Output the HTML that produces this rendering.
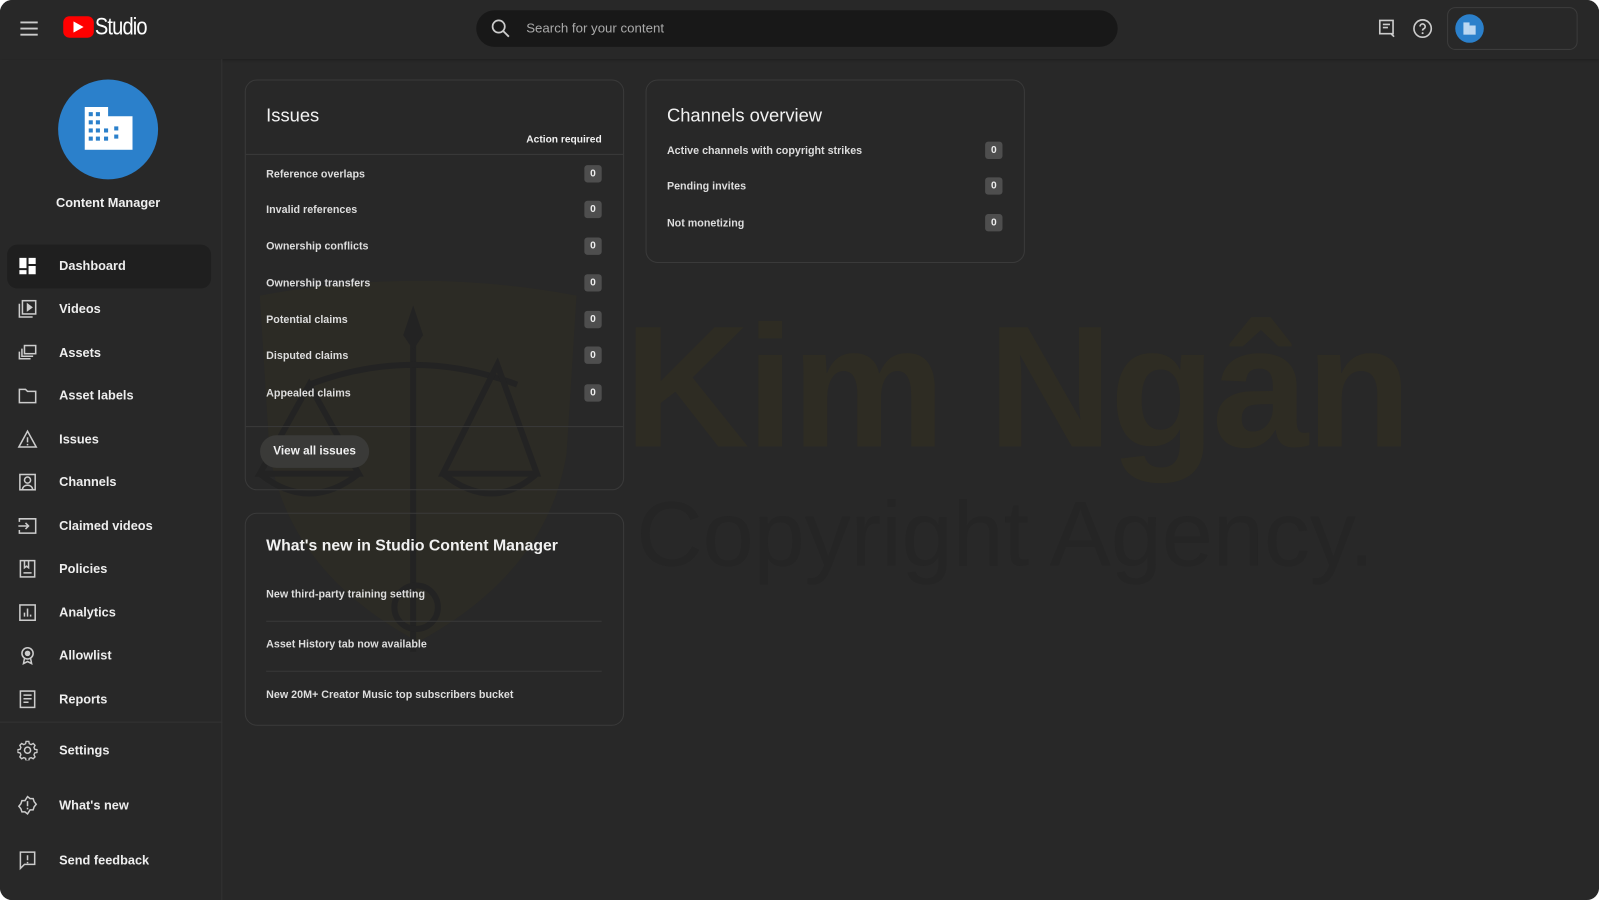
<!DOCTYPE html>
<html><head><meta charset="utf-8">
<style>
*{box-sizing:border-box;margin:0;padding:0}
html,body{width:1599px;height:900px;background:#fff;overflow:hidden}
#s{position:absolute;left:0;top:0;width:1568px;height:883px;transform:scale(1.0198,1.0193);transform-origin:0 0;background:#282828;border-radius:12px;overflow:hidden;font-family:"Liberation Sans",sans-serif;color:#f1f1f1}
.a{position:absolute}
.hdr{left:0;top:0;width:1568px;height:58px;background:#282828;box-shadow:0 1px 3px rgba(0,0,0,.35)}
.side{left:0;top:58px;width:218px;height:825px;border-right:1px solid #333;background:#282828}
.nav{position:absolute;left:0;width:218px;height:42px;display:flex;align-items:center;font-size:12.5px;font-weight:bold;color:#eee}
.nav svg{position:absolute;left:17px;width:20px;height:20px}
.nav span{position:absolute;left:58px}
.card{position:absolute;border:1px solid #3a3a3a;border-radius:12px;background:transparent}
.row{position:absolute;left:20px;right:21px;font-size:10.5px;color:#ddd;font-weight:bold}
.bd{position:absolute;right:0;top:-3px;width:17px;height:17px;background:#4e4e4e;border-radius:3px;font-size:10px;text-align:center;line-height:17px;color:#eee}
.hl{position:absolute;height:1px;background:#393939}
</style></head><body>
<div id="s">
<svg class="a" style="left:245px;top:265px" width="330" height="380" viewBox="0 0 340 380">
<path d="M10 20 Q170 -10 330 20 L320 180 Q300 300 170 370 Q40 300 20 180 Z" fill="#2d2b24" opacity=".85"/>
<g stroke="#232323" stroke-width="6" fill="none">
<line x1="165" y1="50" x2="165" y2="380"/><path d="M60 110 Q165 70 270 110"/>
<path d="M60 110 L10 200 L110 200 Z M10 200 Q60 240 110 200"/>
<path d="M250 90 L195 200 L290 200 Z M195 200 Q245 240 290 200"/>
<circle cx="168" cy="335" r="22"/></g>
<path d="M165 30 L175 60 L165 75 L155 60 Z" fill="#232323"/>
</svg>
<div class="a" style="left:612px;top:282px;font-size:170px;font-weight:bold;color:#2e2c23;letter-spacing:-3px;white-space:nowrap">Kim Ngân</div>
<div class="a" style="left:624px;top:474px;font-size:90px;color:#252525;white-space:nowrap">Copyright Agency.</div>

<div class="a hdr">
<svg class="a" style="left:19px;top:20px" width="19" height="16" viewBox="0 0 19 16"><path d="M1 2h17M1 8h17M1 14h17" stroke="#ccc" stroke-width="1.8"/></svg>
<div class="a" style="left:62px;top:16px;width:30px;height:21px;background:#f00;border-radius:6px"></div>
<svg class="a" style="left:72px;top:21px" width="10" height="11"><path d="M0 0L10 5.5L0 11Z" fill="#fff"/></svg>
<div class="a" style="left:93px;top:13px;font-family:'Liberation Sans Narrow','Liberation Sans',sans-serif;font-size:24px;color:#fff;letter-spacing:-1px;transform:scaleX(.82);transform-origin:0 0">Studio</div>
<div class="a" style="left:467px;top:10px;width:629px;height:36px;background:#181818;border-radius:18px"></div>
<svg class="a" style="left:482px;top:19px" width="18" height="18" viewBox="0 0 18 18"><circle cx="7" cy="7" r="6" stroke="#ccc" stroke-width="1.7" fill="none"/><path d="M11.5 11.5L17 17" stroke="#ccc" stroke-width="1.8"/></svg>
<div class="a" style="left:516px;top:20px;font-size:13px;color:#aaa">Search for your content</div>
<svg class="a" style="left:1351px;top:18px" width="18" height="19" viewBox="0 0 18 19"><path d="M2 2h13v13H2z" stroke="#ccc" stroke-width="1.6" fill="none"/><path d="M5 6h7M5 9h5M13 15l3 3" stroke="#ccc" stroke-width="1.6"/></svg>
<svg class="a" style="left:1385px;top:18px" width="20" height="20" viewBox="0 0 20 20"><circle cx="10" cy="10" r="8.5" stroke="#ccc" stroke-width="1.6" fill="none"/><path d="M7.5 8a2.5 2.5 0 1 1 3.5 2.3c-.8.4-1 .8-1 1.7" stroke="#ccc" stroke-width="1.6" fill="none"/><circle cx="10" cy="14.5" r="1" fill="#ccc"/></svg>
<div class="a" style="left:1419px;top:7px;width:128px;height:42px;border:1px solid #3c3c3c;border-radius:8px"></div>
<div class="a" style="left:1427px;top:14px;width:28px;height:28px;border-radius:50%;background:#2b80cb"></div>
<div class="a" style="left:1435px;top:22px;width:6px;height:12px;background:#bcd8f2"></div>
<div class="a" style="left:1441px;top:25px;width:6px;height:9px;background:#bcd8f2"></div>
</div>

<div class="a side">
<div class="a" style="left:57px;top:20px;width:98px;height:98px;border-radius:50%;background:#2b80cb"></div>
<svg class="a" style="left:83px;top:47px" width="47" height="42" viewBox="0 0 47 42"><path d="M0 0h23v9h24v33H0z" fill="#fff"/><g fill="#2b80cb"><rect x="4" y="5" width="4" height="4"/><rect x="11" y="5" width="4" height="4"/><rect x="4" y="13" width="4" height="4"/><rect x="11" y="13" width="4" height="4"/><rect x="4" y="21" width="4" height="4"/><rect x="11" y="21" width="4" height="4"/><rect x="4" y="29" width="4" height="4"/><rect x="11" y="29" width="4" height="4"/><rect x="19" y="21" width="4" height="4"/><rect x="19" y="29" width="4" height="4"/><rect x="29" y="19" width="4" height="4"/><rect x="29" y="27" width="4" height="4"/></g></svg>
<div class="a" style="left:0;width:212px;top:134px;text-align:center;font-size:12.5px;font-weight:bold">Content Manager</div>
<div class="a" style="left:7px;top:182px;width:200px;height:43px;background:#1f1f1f;border-radius:10px"></div>
<div class="nav" style="top:182px"><svg viewBox="0 0 20 20"><path d="M2 2h7v10H2zM11 2h7v6h-7zM11 10h7v8h-7zM2 14h7v4H2z" fill="#fff"/></svg><span>Dashboard</span></div>
<div class="nav" style="top:224px"><svg viewBox="0 0 20 20" fill="none" stroke="#ccc" stroke-width="1.5"><rect x="5" y="2" width="13" height="13"/><path d="M2 5v13h13"/><path d="M10 5.5l4 3-4 3z" fill="#ccc"/></svg><span>Videos</span></div>
<div class="nav" style="top:267px"><svg viewBox="0 0 20 20" fill="none" stroke="#ccc" stroke-width="1.5"><rect x="7" y="3" width="11" height="8"/><path d="M4.5 6v7.5h11M2 9v7h11"/></svg><span>Assets</span></div>
<div class="nav" style="top:309px"><svg viewBox="0 0 20 20" fill="none" stroke="#ccc" stroke-width="1.5"><path d="M2 4h6l2 2h8v11H2z"/></svg><span>Asset labels</span></div>
<div class="nav" style="top:352px"><svg viewBox="0 0 20 20" fill="none" stroke="#ccc" stroke-width="1.5"><path d="M10 2L1.5 17.5h17z"/><path d="M10 8v5M10 14.5v1.5"/></svg><span>Issues</span></div>
<div class="nav" style="top:394px"><svg viewBox="0 0 20 20" fill="none" stroke="#ccc" stroke-width="1.5"><rect x="2.5" y="2.5" width="15" height="15"/><circle cx="10" cy="8" r="3"/><path d="M5 17.5c0-3 2.5-4.5 5-4.5s5 1.5 5 4.5"/></svg><span>Channels</span></div>
<div class="nav" style="top:437px"><svg viewBox="0 0 20 20" fill="none" stroke="#ccc" stroke-width="1.5"><path d="M2 6V3h16v14H2v-3"/><path d="M1 10h10M8 7l3 3-3 3"/></svg><span>Claimed videos</span></div>
<div class="nav" style="top:479px"><svg viewBox="0 0 20 20" fill="none" stroke="#ccc" stroke-width="1.5"><rect x="3" y="2" width="14" height="16"/><path d="M7 2v7l2-1.5L11 9V2M6 14h8"/></svg><span>Policies</span></div>
<div class="nav" style="top:522px"><svg viewBox="0 0 20 20" fill="none" stroke="#ccc" stroke-width="1.5"><rect x="2.5" y="2.5" width="15" height="15"/><path d="M7 14V10M10 14V6M13 14v-2"/></svg><span>Analytics</span></div>
<div class="nav" style="top:564px"><svg viewBox="0 0 20 20" fill="none" stroke="#ccc" stroke-width="1.5"><circle cx="10" cy="8" r="5.5"/><circle cx="10" cy="8" r="2" fill="#ccc"/><path d="M7 13l-1 5 4-2 4 2-1-5"/></svg><span>Allowlist</span></div>
<div class="nav" style="top:607px"><svg viewBox="0 0 20 20" fill="none" stroke="#ccc" stroke-width="1.5"><rect x="3" y="2" width="14" height="16"/><path d="M6 6h8M6 9.5h8M6 13h5"/></svg><span>Reports</span></div>
<div class="hl" style="left:0;top:650px;width:218px;background:#333"></div>
<div class="nav" style="top:657px"><svg viewBox="0 0 20 20" fill="none" stroke="#ccc" stroke-width="1.5"><circle cx="10" cy="10" r="3"/><path d="M8.5 1.5h3l.5 2.5 2 1 2.3-1.2 2 2-1.2 2.3.8 2 2.6.5v3l-2.6.5-.8 2 1.2 2.3-2 2-2.3-1.2-2 .8-.5 2.6h-3l-.5-2.6-2-.8-2.3 1.2-2-2 1.2-2.3-.8-2-2.6-.5v-3l2.6-.5.8-2-1.2-2.3 2-2 2.3 1.2 2-1z" transform="scale(.9) translate(1 0)"/></svg><span>Settings</span></div>
<div class="nav" style="top:711px"><svg viewBox="0 0 20 20" fill="none" stroke="#ccc" stroke-width="1.5"><path d="M10 1.5l2.5 2h3l1 3 2 2.5-2 2.5-1 3h-3L10 18.5l-2.5-2h-3l-1-3-2-2.5 2-2.5 1-3h3z"/><path d="M10 6v5M10 12.5v1.5"/></svg><span>What's new</span></div>
<div class="nav" style="top:765px"><svg viewBox="0 0 20 20" fill="none" stroke="#ccc" stroke-width="1.5"><path d="M3 2h14v12H7l-4 4z"/><path d="M10 5v5M10 11.5v1.5"/></svg><span>Send feedback</span></div>
</div>

<div class="card" style="left:240px;top:78px;width:372px;height:403px">
<div class="a" style="left:20px;top:24px;font-size:18px">Issues</div>
<div class="a" style="right:21px;top:53px;font-size:10px;font-weight:bold">Action required</div>
<div class="hl" style="left:0;right:0;top:72px"></div>
<div class="row" style="top:86px">Reference overlaps<div class="bd">0</div></div>
<div class="row" style="top:121px">Invalid references<div class="bd">0</div></div>
<div class="row" style="top:157px">Ownership conflicts<div class="bd">0</div></div>
<div class="row" style="top:193px">Ownership transfers<div class="bd">0</div></div>
<div class="row" style="top:229px">Potential claims<div class="bd">0</div></div>
<div class="row" style="top:264px">Disputed claims<div class="bd">0</div></div>
<div class="row" style="top:301px">Appealed claims<div class="bd">0</div></div>
<div class="hl" style="left:0;right:0;top:339px"></div>
<div class="a" style="left:14px;top:348px;width:107px;height:32px;border-radius:16px;background:#3a3a38;font-size:11.5px;font-weight:bold;line-height:32px;text-align:center">View all issues</div>
</div>

<div class="card" style="left:240px;top:503px;width:372px;height:209px">
<div class="a" style="left:20px;top:23px;font-size:15.5px;font-weight:bold">What's new in Studio Content Manager</div>
<div class="row" style="top:73px">New third-party training setting</div>
<div class="hl" style="left:20px;right:21px;top:105px"></div>
<div class="row" style="top:122px">Asset History tab now available</div>
<div class="hl" style="left:20px;right:21px;top:154px"></div>
<div class="row" style="top:172px">New 20M+ Creator Music top subscribers bucket</div>
</div>

<div class="card" style="left:633px;top:78px;width:372px;height:180px">
<div class="a" style="left:20px;top:24px;font-size:18px">Channels overview</div>
<div class="row" style="top:63px">Active channels with copyright strikes<div class="bd">0</div></div>
<div class="row" style="top:98px">Pending invites<div class="bd">0</div></div>
<div class="row" style="top:134px">Not monetizing<div class="bd">0</div></div>
</div>
</div>
</body></html>
